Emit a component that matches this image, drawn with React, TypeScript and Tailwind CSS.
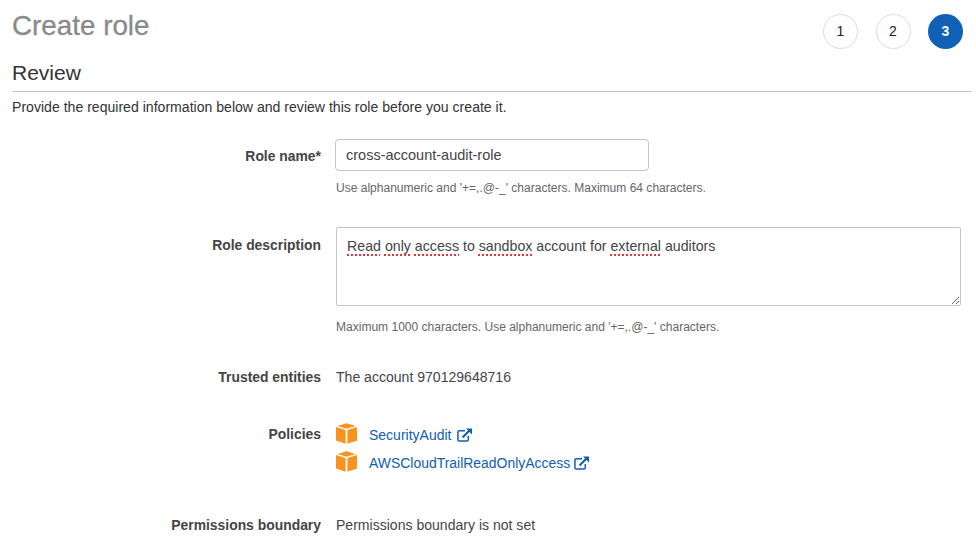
function Cube() {
  return (
    <svg width="21" height="21" viewBox="0 0 21 21" className="flex-shrink-0">
      <path d="M10.5 0.3 L19.5 3 L10.5 5.7 L1.5 3 Z" fill="#f7931e" />
      <path d="M0 4 L9.6 6.9 V20.8 L0 17.6 Z" fill="#f7931e" />
      <path d="M21 4 L11.4 6.9 V20.8 L21 17.6 Z" fill="#f7931e" />
    </svg>
  )
}

function LinkOut() {
  return (
    <svg width="15" height="14" viewBox="0 0 15 14" className="flex-shrink-0" fill="none" stroke="#0f5eb0">
      <path d="M8 2.8 H2.2 Q0.9 2.8 0.9 4.1 V11.7 Q0.9 13 2.2 13 H10 Q11.3 13 11.3 11.7 V8" strokeWidth="1.5" />
      <path d="M5.6 9.4 L12.4 2.6" strokeWidth="2.1" />
      <path d="M9 0.4 H15 V6.4 Z" fill="#0f5eb0" stroke="none" />
    </svg>
  )
}

function Row({ label, className, children }: { label: string; className: string; children: React.ReactNode }) {
  return (
    <div className={`flex ${className}`}>
      <div className="w-[321px] flex-shrink-0 text-right text-[13.9px] font-bold text-[#444]">{label}</div>
      <div className="ml-[15px] flex-1">{children}</div>
    </div>
  )
}

function Step({ n, active }: { n: number; active?: boolean }) {
  return (
    <div
      className={
        active
          ? 'w-[35px] h-[35px] rounded-full bg-[#1160b7] text-white font-bold flex items-center justify-center text-[14px]'
          : 'w-[35px] h-[35px] rounded-full border border-[#ddd] text-[#222] flex items-center justify-center text-[14px]'
      }
    >
      {n}
    </div>
  )
}

const squiggle =
  'underline decoration-dotted decoration-[1.5px] decoration-[#e8323a] underline-offset-[3px] [text-decoration-skip-ink:none]'

export default function App() {
  return (
    <div className="w-[976px] h-[551px] overflow-hidden bg-white font-['Liberation_Sans',sans-serif] text-[#444]">
      {/* Header */}
      <div className="flex justify-between pl-[12px] pr-[13px] pt-[14px] h-[49px]">
        <h1 className="text-[27.8px] leading-[22px] pt-[1px] text-[#8a8a8a] [-webkit-text-stroke:0.3px_#8a8a8a]">Create role</h1>
        <div className="flex gap-[17.5px]">
          <Step n={1} />
          <Step n={2} />
          <Step n={3} active />
        </div>
      </div>

      <div className="mx-[12px] mr-[4px] pt-[12px] pb-[6px] border-b border-[#c4c4c4]">
        <h2 className="text-[21px] leading-[24px] text-[#333]">Review</h2>
      </div>
      <p className="pl-[12px] mt-[6px] text-[14.08px] leading-[18px] text-[#333]">
        Provide the required information below and review this role before you create it.
      </p>

      {/* Form */}
      <Row label="Role name*" className="mt-[23px] leading-[34px]">
        <div className="-ml-[1px] w-[314px] h-[32px] border border-[#c4c4c4] rounded-[4px] px-[10px] text-[14.5px] leading-[30px] text-[#444]">
          cross-account-audit-role
        </div>
        <p className="mt-[9px] text-[12.04px] leading-[16px] text-[#666]">
          Use alphanumeric and '+=,.@-_' characters. Maximum 64 characters.
        </p>
      </Row>

      <Row label="Role description" className="mt-[31px] leading-[36px]">
        <div className="w-[625px] h-[79px] border border-[#c4c4c4] rounded-[2px] px-[10px] py-[9px] text-[14.2px] leading-[18px] text-[#444] resize overflow-auto">
          <span className={squiggle}>Read</span> <span className={squiggle}>only</span> <span className={squiggle}>access</span> to{' '}
          <span className={squiggle}>sandbox</span> account for <span className={squiggle}>external</span> auditors
        </div>
        <p className="mt-[13px] text-[12.04px] leading-[16px] text-[#666]">
          Maximum 1000 characters. Use alphanumeric and '+=,.@-_' characters.
        </p>
      </Row>

      <Row label="Trusted entities" className="mt-[33px] leading-[18px]">
        <div className="text-[14.05px] text-[#444]">The account 970129648716</div>
      </Row>

      <Row label="Policies" className="mt-[39px] leading-[18px]">
        <div className="flex flex-col gap-[7px] -mt-[2px]">
          <div className="flex items-center gap-[12px] h-[21px]">
            <Cube />
            <a className="flex items-center gap-[6px] pt-[2px] text-[14px] text-[#0f5eb0]">
              SecurityAudit <LinkOut />
            </a>
          </div>
          <div className="flex items-center gap-[12px] h-[21px]">
            <Cube />
            <a className="flex items-center gap-[4px] pt-[2px] text-[13.95px] text-[#0f5eb0]">
              AWSCloudTrailReadOnlyAccess <LinkOut />
            </a>
          </div>
        </div>
      </Row>

      <Row label="Permissions boundary" className="mt-[44px] leading-[18px]">
        <div className="text-[14.05px] text-[#444]">Permissions boundary is not set</div>
      </Row>
    </div>
  )
}
